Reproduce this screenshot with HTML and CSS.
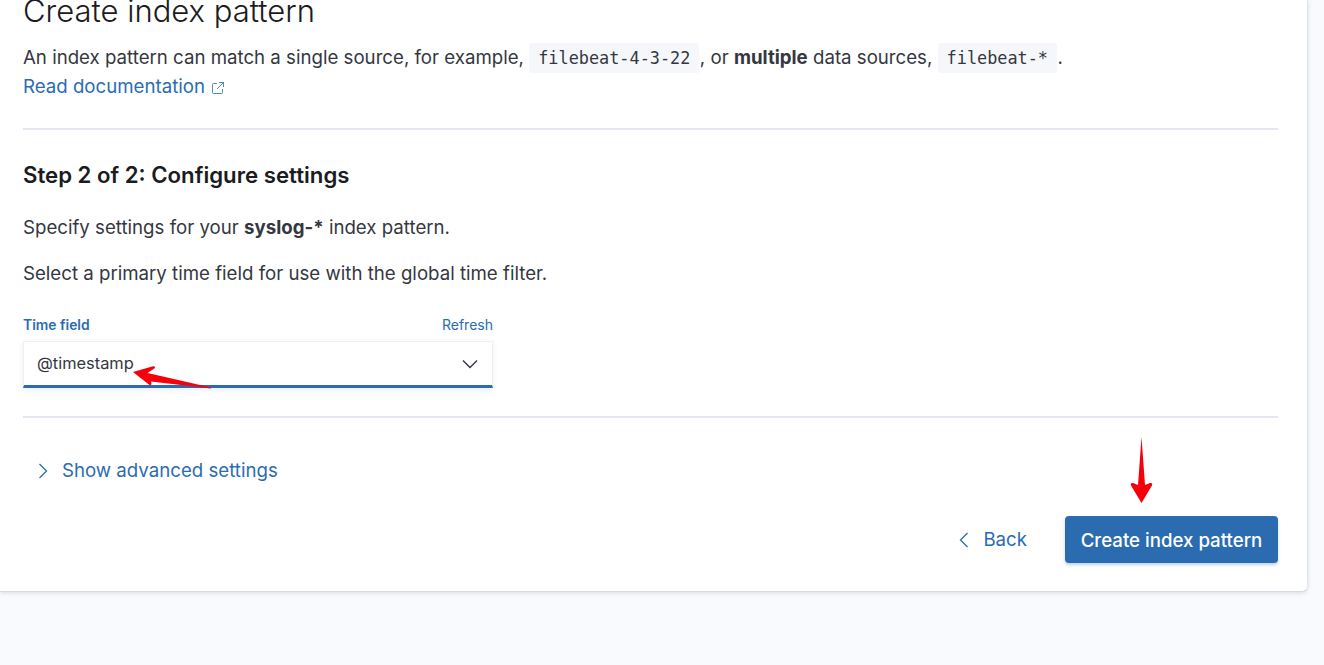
FILE: index.html
```html
<!DOCTYPE html>
<html lang="en">
<head>
<meta charset="utf-8">
<title>Create index pattern</title>
<link rel="stylesheet" href="styles.css">
</head>
<body>
<main class="card">
  <h1 class="title">Create index pattern</h1>
  <p class="intro">An index pattern can match a single source, for example, <code class="code">filebeat-4-3-22</code>, or <strong>multiple</strong> data sources, <code class="code">filebeat-*</code>.</p>
  <a class="doc-link" href="#">Read documentation
    <svg class="ext" viewBox="0 0 12 12" width="12" height="12" fill="none" stroke="currentColor" stroke-width="0.8"><path d="M5 1.5H1.5a1 1 0 0 0-1 1v8a1 1 0 0 0 1 1h8a1 1 0 0 0 1-1V7"/><path d="M7 .5h4.5V5M11.5.5 5 7"/></svg>
  </a>
  <hr class="rule rule-top">
  <h2 class="step">Step 2 of 2: Configure settings</h2>
  <p class="line first">Specify settings for your <strong>syslog-*</strong> index pattern.</p>
  <p class="line second">Select a primary time field for use with the global time filter.</p>
  <div class="field">
    <div class="field-head"><label class="field-label">Time field</label><a class="refresh" href="#">Refresh</a></div>
    <div class="select">
      <span class="select-value">@timestamp</span>
      <svg class="chev" viewBox="0 0 16 10" width="16" height="10" fill="none" stroke="#343741" stroke-width="1.4"><path d="M1 1.5 8 8.5l7-7"/></svg>
    </div>
  </div>
  <hr class="rule rule-bottom">
  <a class="advanced" href="#">
    <svg viewBox="0 0 10 16" width="10" height="16" fill="none" stroke="currentColor" stroke-width="1.3"><path d="M1.5 1 8.5 8l-7 7"/></svg>
    Show advanced settings
  </a>
  <div class="actions">
    <a class="back" href="#">
      <svg viewBox="0 0 10 16" width="10" height="16" fill="none" stroke="currentColor" stroke-width="1.3"><path d="M8.5 1 1.5 8l7 7"/></svg>
      Back
    </a>
    <button class="primary" type="button">Create index pattern</button>
  </div>
</main>
<svg class="arrow arrow-left" viewBox="0 0 80 30" width="80" height="30"><path fill="#f5000b" d="M1 12 L21 6.2 Q23.5 6 23 8 L15.5 13 L79 27.4 L79 28.6 L19 21.5 L19.5 23.5 Q19.5 25.5 17.5 25 Z"/></svg>
<svg class="arrow arrow-down" viewBox="0 0 23 66" width="23" height="66"><path fill="#f5000b" d="M11.5 0 L15 48 L20 46 Q23 45.5 22 48.5 L11.5 66 L1 48.5 Q0 45.5 3 46 L8 48 Z"/></svg>
</body>
</html>
```

FILE: styles.css
```css
* { box-sizing: border-box; }
html, body { margin: 0; height: 665px; overflow: hidden; }
body {
  background: #f9fafd;
  font-family: Inter, "Noto Sans", sans-serif;
  color: #343741;
  font-size: 18.66px;
  position: relative;
}
a { color: #2b6cb0; text-decoration: none; }
.card {
  width: 1308px;
  height: 592px;
  padding: 0 29px 0 23px;
  background: #fff;
  border-right: 1px solid #dfe4ee;
  border-bottom: 1px solid #d3dae6;
  border-bottom-right-radius: 6px;
  box-shadow: 0 1px 4px rgba(152,162,179,.35);
  display: flex;
  flex-direction: column;
}
.title {
  margin: -9px 0 0;
  font-size: 31px;
  line-height: 40px;
  font-weight: 300;
  color: #1a1c21;
  white-space: nowrap;
}
.intro { margin: 12px 0 0; line-height: 29px; white-space: nowrap; }
.intro strong, .line strong { font-weight: 700; }
.code {
  font-family: "DejaVu Sans Mono", monospace;
  font-size: 16.85px;
  line-height: 1;
  background: #f5f7fa;
  padding: 5px 9px;
  margin-right: 0.5px;
  border-radius: 2px;
}
.doc-link { line-height: 29px; display: inline-flex; align-items: center; gap: 7px; align-self: flex-start; }
.ext { margin-top: 3px; }
.rule { width: 100%; margin: 0; border: 0; height: 2px; background: #e3e7f0; flex: none; }
.rule-top { margin-top: 27px; }
.step { margin: 28px 0 0; font-size: 22.2px; line-height: 34px; font-weight: 600; color: #1a1c21; }
.line { margin: 0; line-height: 29px; }
.line.first { margin-top: 21px; }
.line.second { margin-top: 17px; }
.field { width: 470.5px; margin-top: 27px; margin-left: -0.5px; }
.field-head { display: flex; justify-content: space-between; align-items: center; height: 20px; font-size: 13.9px; padding-left: 0.5px; }
.field-label { font-weight: 600; color: #2b6cb0; }
.refresh { font-size: 14px; margin-top: -1px; }
.select {
  margin-top: 6px;
  height: 47px;
  padding: 0 14px 0 13.5px;
  background: #fff;
  border: 1px solid #eef0f5;
  border-bottom: 3px solid #2b6cb0;
  box-shadow: 0 2px 5px rgba(152,162,179,.2);
  display: flex;
  align-items: center;
  justify-content: space-between;
  font-size: 16.4px;
}
.select-value { margin-top: -1px; }
.rule-bottom { margin-top: 28px; }
.advanced { margin-top: 40px; display: inline-flex; align-items: center; gap: 14px; line-height: 26px; align-self: flex-start; padding-left: 15px; }
.actions { margin-top: 32px; display: flex; justify-content: flex-end; align-items: center; }
.back { display: inline-flex; align-items: center; gap: 14px; margin-right: 38px; }
.primary {
  width: 213px;
  height: 47px;
  padding: 2px 0 0;
  background: #2b6cb0;
  color: #fff;
  border: 0;
  border-radius: 4px;
  font: 500 18.66px Inter, sans-serif;
  box-shadow: 0 2px 3px rgba(43,108,176,.3);
}
.arrow { position: absolute; }
.arrow-left { left: 132px; top: 360px; }
.arrow-down { left: 1130px; top: 437px; }
```
